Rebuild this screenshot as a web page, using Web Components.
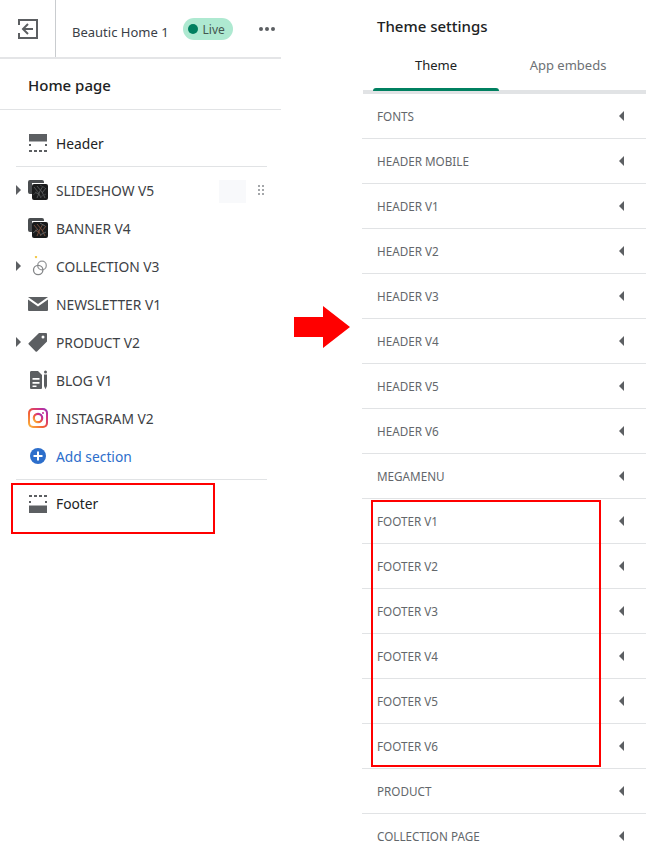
<!DOCTYPE html>
<html>
<head>
<meta charset="utf-8">
<style>
html,body{margin:0;background:#fff;}
body{width:646px;height:859px;overflow:hidden;font-family:"Noto Sans",sans-serif;}
</style>
</head>
<body>
<guide-page>
    <section-sidebar slot="left">
        <section-row kind="top" label="Header"><svg slot="icon" width="20" height="20" viewBox="0 0 20 20"><path fill="#5c5f62" d="M1 1h18v7.500H1z"/><path fill="#5c5f62" d="M1 11h2v2H1zM17 11h2v2h-2zM1 17h3v2H1zM6 17h3v2H6zM11 17h3v2h-3zM16 17h3v2h-3z"/></svg></section-row>
        <hr-line></hr-line>
        <section-row label="SLIDESHOW V5" arrow handle><thumb-stack slot="icon"></thumb-stack></section-row>
        <section-row label="BANNER V4"><thumb-stack slot="icon" warm></thumb-stack></section-row>
        <section-row label="COLLECTION V3" arrow><svg slot="icon" width="20" height="20" viewBox="0 0 20 20"><circle cx="8" cy="1" r="1.200" fill="#f2c94c"/><circle cx="14" cy="9.500" r="4.300" fill="none" stroke="#989a9c" stroke-width="1.300"/><circle cx="10.200" cy="14" r="4.700" fill="none" stroke="#848688" stroke-width="1.300"/></svg></section-row>
        <section-row label="NEWSLETTER V1"><svg slot="icon" width="20" height="20" viewBox="0 0 20 20"><path fill="#5c5f62" d="M0 3h20L10 10z"/><path fill="#5c5f62" d="M0 5.500l10 7 10-7V16a1 1 0 0 1-1 1H1a1 1 0 0 1-1-1z"/></svg></section-row>
        <section-row label="PRODUCT V2" arrow><svg slot="icon" width="20" height="20" viewBox="0 0 20 20"><path fill="#5c5f62" fill-rule="evenodd" d="M11 1h7a1 1 0 0 1 1 1v7.500L9 19.500a1 1 0 0 1-1.400 0L.8 12.400a1 1 0 0 1 0-1.400zM15 3.500a1.500 1.500 0 1 0 0 3 1.500 1.500 0 0 0 0-3z"/></svg></section-row>
        <section-row label="BLOG V1"><svg slot="icon" width="20" height="20" viewBox="0 0 20 20"><path fill="#5c5f62" fill-rule="evenodd" d="M2 2a1.500 1.500 0 0 1 1.500-1H10l4 4v13a1 1 0 0 1-1 1H3a1 1 0 0 1-1-1zM4.500 8v1.800h7V8zM4.500 12v1.800h7V12zM4.500 15.500v1.500h4v-1.500z"/><path fill="#5c5f62" d="M16 4.500h3V16l-1.500 3.200L16 16z"/><circle cx="17.500" cy="2" r="1.500" fill="#5c5f62"/></svg></section-row>
        <section-row label="INSTAGRAM V2"><svg slot="icon" width="20" height="20" viewBox="0 0 20 20"><defs><linearGradient id="ig" x1="0" y1="1" x2="1" y2="0"><stop offset="0" stop-color="#fdc13b"/><stop offset=".45" stop-color="#f0553a"/><stop offset=".8" stop-color="#c62f94"/><stop offset="1" stop-color="#7e3bc4"/></linearGradient></defs><rect width="20" height="20" rx="5" fill="url(#ig)"/><rect x="2" y="2" width="16" height="16" rx="3.500" fill="#fff"/><circle cx="10" cy="10" r="4.200" fill="none" stroke="url(#ig)" stroke-width="2.200"/><circle cx="15" cy="5" r="1" fill="#c62f94"/></svg></section-row>
        <section-row kind="add" label="Add section"><svg slot="icon" width="20" height="20" viewBox="0 0 20 20"><circle cx="10" cy="10" r="8" fill="#2c6ecb"/><path fill="#fff" d="M9 5.500h2V9h3.500v2H11v3.500H9V11H5.500V9H9z"/></svg></section-row>
        <hr-line bottom></hr-line>
        <section-row kind="foot" label="Footer"><svg slot="icon" width="20" height="20" viewBox="0 0 20 20"><path fill="#5c5f62" d="M1 11.500h18V19H1z"/><path fill="#5c5f62" d="M1 1h3v2H1zM6 1h3v2H6zM11 1h3v2h-3zM16 1h3v2h-3zM1 7h2v2H1zM17 7h2v2h-2z"/></svg></section-row>
    </section-sidebar>
    <settings-panel slot="right">
        <settings-row>FONTS</settings-row>
        <settings-row>HEADER MOBILE</settings-row>
        <settings-row>HEADER V1</settings-row>
        <settings-row>HEADER V2</settings-row>
        <settings-row>HEADER V3</settings-row>
        <settings-row>HEADER V4</settings-row>
        <settings-row>HEADER V5</settings-row>
        <settings-row>HEADER V6</settings-row>
        <settings-row>MEGAMENU</settings-row>
        <settings-row>FOOTER V1</settings-row>
        <settings-row>FOOTER V2</settings-row>
        <settings-row>FOOTER V3</settings-row>
        <settings-row>FOOTER V4</settings-row>
        <settings-row>FOOTER V5</settings-row>
        <settings-row>FOOTER V6</settings-row>
        <settings-row>PRODUCT</settings-row>
        <settings-row>COLLECTION PAGE</settings-row>
    </settings-panel>
</guide-page>

<script>
class GuidePage extends HTMLElement {
    constructor() {
        super();
        this.attachShadow({ mode: 'open' }).innerHTML = `
        <style>
        :host{ display:flex; width:646px; height:859px; position:relative; overflow:hidden; }
        .left{ width:281px; flex:none; }
        .mid{ width:81px; flex:none; padding:306px 0 0 13px; box-sizing:border-box; }
        .mid svg{ display:block; }
        .right{ flex:1; min-width:0; }
        .mark{ position:absolute; border:2px solid #f00; box-sizing:border-box; pointer-events:none; }
        .m1{ left:11px; top:483px; width:204px; height:51px; }
        .m2{ left:371px; top:500px; width:230px; height:267px; }
        </style>
        <div class="left"><slot name="left"></slot></div>
        <div class="mid"><svg width="56" height="42" viewBox="0 0 56 42"><path fill="#f00" d="M0 11h29V0l27 21-27 21V31H0z"/></svg></div>
        <div class="right"><slot name="right"></slot></div>
        <div class="mark m1"></div>
        <div class="mark m2"></div>
        `;
    }
}

class SectionSidebar extends HTMLElement {
    constructor() {
        super();
        this.attachShadow({ mode: 'open' }).innerHTML = `
        <style>
        :host{ display:block; color:#202223; font-size:14px; }
        .bar{ display:flex; align-items:center; height:57px; border-bottom:2px solid #e4e5e7; }
        .back{ width:55px; height:100%; flex:none; border-right:1px solid #c9cccf; display:flex; align-items:center; justify-content:center; }
        .back svg{ margin-top:1px; }
        .name{ margin:7px 0 0 16px; font-size:13px; color:#3a4047; white-space:nowrap; }
        .badge{ display:flex; align-items:center; gap:5px; margin:1px 0 0 14px; height:22px; padding:0 8px 0 5px; border-radius:11px; background:#aee9d1; color:#44574f; font-size:12px; }
        .dot{ width:10px; height:10px; border-radius:50%; background:#007f5f; }
        .more{ margin:1px 6px 0 auto; display:flex; gap:2px; }
        .more i{ width:4px; height:4px; border-radius:50%; background:#5c5f62; }
        .title{ height:48px; padding:2px 0 0 28px; display:flex; align-items:center; border-bottom:1px solid #e1e3e5; font-size:15px; font-weight:500; }
        .list{ padding-top:12px; }
        </style>
        <div class="bar">
            <div class="back"><svg width="20" height="20" viewBox="0 0 20 20"><path fill="#5c5f62" d="M0 0h20v20H0v-6h2v4h16V2H2v4H0z"/><path fill="#5c5f62" d="M9.300 4.300l1.400 1.400L7.400 9H15v2H7.400l3.300 3.300-1.400 1.400L3.600 10z"/></svg></div>
            <span class="name">Beautic Home 1</span>
            <span class="badge"><span class="dot"></span>Live</span>
            <span class="more"><i></i><i></i><i></i></span>
        </div>
        <div class="title">Home page</div>
        <div class="list"><slot></slot></div>
        `;
    }
}

class HrLine extends HTMLElement {
    constructor() {
        super();
        this.attachShadow({ mode: 'open' }).innerHTML = `
        <style>
        :host{ display:block; height:1px; margin:0 14px 4px 16px; background:#e1e3e5; }
        :host([bottom]){ margin-top:4px; margin-bottom:0; }
        </style>
        `;
    }
}

class SectionRow extends HTMLElement {
    constructor() {
        super();
        this.attachShadow({ mode: 'open' }).innerHTML = `
        <style>
        :host{ display:flex; align-items:center; height:38px; position:relative; font-size:13.8px; color:#3d4145; }
        :host([kind="top"]){ height:42px; padding-bottom:2px; color:#202223; }
        :host([kind="foot"]){ height:47px; padding-bottom:2px; color:#202223; }
        :host([kind="add"]){ color:#2c6ecb; }
        .arrow{ width:14px; margin-left:14px; flex:none; }
        .arrow svg{ display:block; margin-left:1px; }
        .icon{ width:20px; height:20px; margin-right:8px; flex:none; display:block; }
        ::slotted(svg){ display:block; }
        .handle{ position:absolute; left:219px; top:9px; width:27px; height:23px; background:#f8f9fb; }
        .dots{ position:absolute; left:258px; top:14px; }
        .dots svg{ display:block; }
        </style>
        <span class="arrow"></span>
        <span class="icon"><slot name="icon"></slot></span>
        <span class="text"></span>
        `;
    }
    connectedCallback() {
        this.shadowRoot.querySelector('.text').textContent = this.getAttribute('label');
        if (this.hasAttribute('arrow')) {
            this.shadowRoot.querySelector('.arrow').innerHTML = '<svg width="6" height="10" viewBox="0 0 6 10"><path fill="#5c5f62" d="M1 0l5 5-5 5z"/></svg>';
        }
        if (this.hasAttribute('handle')) {
            const box = document.createElement('div');
            box.className = 'handle';
            const dots = document.createElement('div');
            dots.className = 'dots';
            dots.innerHTML = '<svg width="6" height="10" viewBox="0 0 6 10"><path fill="#a4a7aa" d="M0 0h2v2H0zM4 0h2v2H4zM0 4h2v2H0zM4 4h2v2H4zM0 8h2v2H0zM4 8h2v2H4z"/></svg>';
            this.shadowRoot.append(box, dots);
        }
    }
}

class ThumbStack extends HTMLElement {
    constructor() {
        super();
        this.attachShadow({ mode: 'open' }).innerHTML = `
        <style>
        :host{ display:block; width:20px; height:20px; }
        svg{ display:block; }
        </style>
        <svg width="20" height="20" viewBox="0 0 20 20">
            <path fill="#4a4d50" d="M0 2a2 2 0 0 1 2-2h12a2 2 0 0 1 2 2v1H4v11H2a2 2 0 0 1-2-2z"/>
            <rect x="4" y="4" width="16" height="16" rx="2" fill="#1a1b1c"/>
            <path class="a" fill="none" stroke="#5a5c5e" stroke-width=".9" d="M6 7l4 5 3 6M9 6l5 6 3 6M15 6l-3 5-3 7M18 8l-4 5M7 12l3 2"/>
            <path class="b" fill="none" stroke="#3c3e40" stroke-width="1" d="M5 15l5-4M12 17l6-3M12 5l5 3"/>
        </svg>
        `;
    }
    connectedCallback() {
        if (this.hasAttribute('warm')) {
            this.shadowRoot.querySelector('.a').setAttribute('stroke', '#7d5240');
            this.shadowRoot.querySelector('.b').setAttribute('stroke', '#5b6063');
        }
    }
}

class SettingsPanel extends HTMLElement {
    constructor() {
        super();
        this.attachShadow({ mode: 'open' }).innerHTML = `
        <style>
        :host{ display:block; font-size:13px; color:#202223; }
        .title{ height:52px; padding:0 0 2px 15px; display:flex; align-items:center; font-size:15px; font-weight:500; }
        .tabs{ display:flex; height:40px; margin-left:1px; border-bottom:4px solid #e1e3e5; box-sizing:border-box; }
        .tab{ width:126px; margin-left:10px; position:relative; text-align:center; line-height:22px; }
        .tab.on::after{ content:''; position:absolute; left:0; right:0; bottom:-1px; height:3px; border-radius:3px 3px 0 0; background:#008060; }
        .tab.off{ margin-left:5px; width:128px; color:#6d7175; }
        </style>
        <div class="title">Theme settings</div>
        <div class="tabs"><div class="tab on">Theme</div><div class="tab off">App embeds</div></div>
        <slot></slot>
        `;
    }
}

class SettingsRow extends HTMLElement {
    constructor() {
        super();
        this.attachShadow({ mode: 'open' }).innerHTML = `
        <style>
        :host{ display:flex; align-items:center; justify-content:space-between; height:45px; box-sizing:border-box; padding:0 22px 0 15px; border-bottom:1px solid #e1e3e5; font-size:11.7px; color:#63676b; }
        :host(:last-child){ border-bottom-color:transparent; }
        svg{ display:block; }
        </style>
        <span><slot></slot></span>
        <svg width="5" height="10" viewBox="0 0 5 10"><path fill="#5c5f62" d="M5 0L0 5l5 5z"/></svg>
        `;
    }
}

customElements.define('guide-page', GuidePage);
customElements.define('section-sidebar', SectionSidebar);
customElements.define('hr-line', HrLine);
customElements.define('section-row', SectionRow);
customElements.define('thumb-stack', ThumbStack);
customElements.define('settings-panel', SettingsPanel);
customElements.define('settings-row', SettingsRow);
</script>
</body>
</html>
